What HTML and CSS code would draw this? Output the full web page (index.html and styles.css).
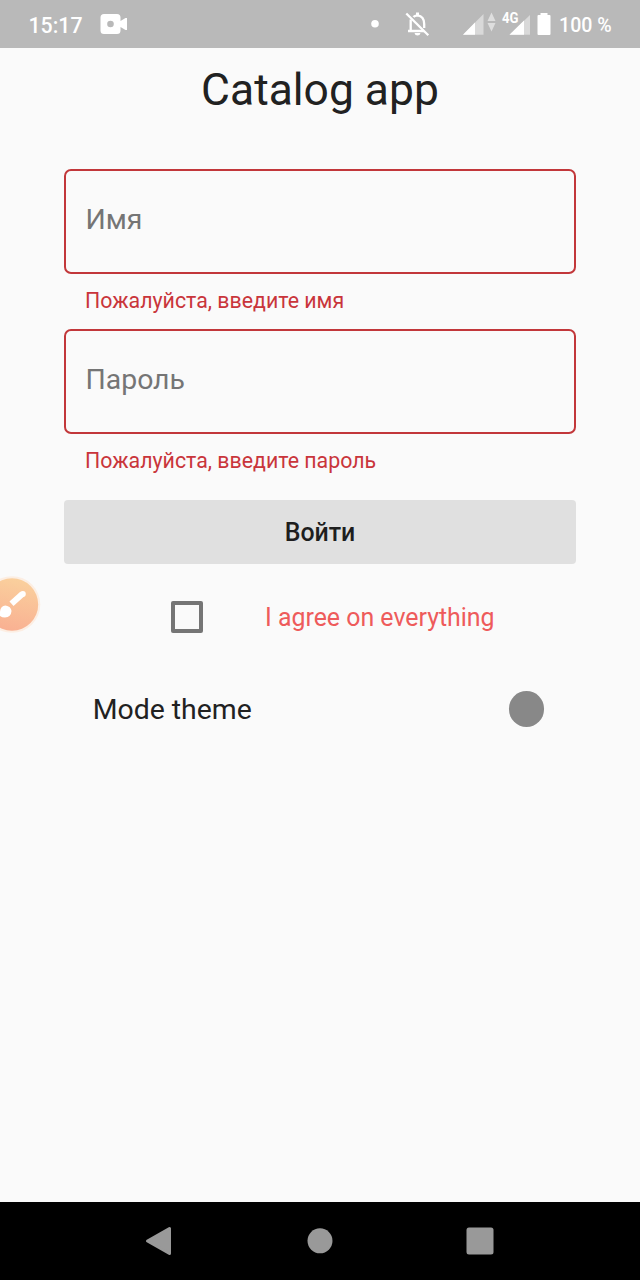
FILE: index.html
```html
<!DOCTYPE html>
<html lang="ru">
<head>
<meta charset="utf-8">
<title>Catalog app</title>
<link rel="stylesheet" href="styles.css">
</head>
<body>
<header class="status">
  <span class="clock">15:17</span>
  <svg class="camera" width="28" height="22" viewBox="0 0 28 22"><path fill="#fff" d="M4 1h13q3.500 0 3.500 3.500v3.500l5-3h1.500v12h-1.500l-5-3v3.500q0 3.500-3.500 3.500H4Q.5 21 .5 17.500v-13Q.5 1 4 1Z"/><circle cx="10.500" cy="11" r="3.300" fill="#b9b9b9"/></svg>
  <span class="spacer"></span>
  <svg class="signals" width="190" height="48" viewBox="0 0 190 48">
    <circle cx="15" cy="23.700" r="3.800" fill="#fff"/>
    <g fill="none" stroke="#fff" stroke-width="2.300">
      <path d="M46.300 13.500l22 21.700"/>
      <path d="M50.700 19.500v11.200M48 31h16M53.500 17q1-1.300 4-1.700q6.700.8 6.700 8.700v4"/>
    </g>
    <path fill="#fff" d="M56 12.500h3v3h-3zM54.500 33h6q-.5 2.500-3 2.500t-3-2.500z"/>
    <path fill="#d9d9d9" d="M123.500 14v20.700H103z"/><path fill="#fff" d="M115 22.500v12.200H103z"/>
    <path fill="#dedede" d="M131.500 12.500l4 8.500h-8zM131.500 31.500l4-8.500h-8z"/>
    <path fill="#d9d9d9" d="M170 15v19.700h-20.500z"/><path fill="#fff" d="M164 20.500v14.200h-14.500z"/>
    <text class="network" x="142" y="22.500" textLength="16.500" lengthAdjust="spacingAndGlyphs">4G</text>
    <path fill="#fff" d="M180.500 13h7v2h2q1 0 1 1v18q0 1-1 1h-11q-1 0-1-1V16q0-1 1-1h2z"/>
  </svg>
  <span class="percent">100 %</span>
</header>
<main class="screen">
  <h1 class="title">Catalog app</h1>
  <form class="form">
    <div class="field">Имя</div>
    <div class="error">Пожалуйста, введите имя</div>
    <div class="field">Пароль</div>
    <div class="error">Пожалуйста, введите пароль</div>
    <button class="submit" type="button">Войти</button>
    <div class="agree"><span class="box"></span><span class="agree-text">I agree on everything</span></div>
    <div class="mode"><span class="mode-text">Mode theme</span><span class="knob"></span></div>
  </form>
  <svg class="brush" width="42" height="60" viewBox="0 0 42 60">
    <defs><linearGradient id="peach" x1=".6" y1="0" x2=".4" y2="1"><stop offset="0" stop-color="#fad09d"/><stop offset="1" stop-color="#f9b092"/></linearGradient></defs>
    <circle cx="12" cy="29.500" r="28.300" fill="#fceee3"/>
    <circle cx="12" cy="29.500" r="26.200" fill="url(#peach)"/>
    <path d="M11.500 28.800L22.300 19" stroke="#fff" stroke-width="6"/>
    <circle cx="22.800" cy="19" r="3" fill="#fff"/>
    <path fill="#fff" d="M0 41V36.500q.5-5.500 5.500-6q5.500.8 6 5.500q-.5 6.200-6.500 6.500q-3 0-5-1.500z"/>
  </svg>
</main>
<nav class="navbar">
  <svg width="160" height="78" viewBox="0 0 160 78"><path d="M67.500 39L89.500 26.500V51.500Z" fill="#999" stroke="#999" stroke-width="3" stroke-linejoin="round"/></svg>
  <svg width="160" height="78" viewBox="0 0 160 78"><circle cx="80" cy="38.800" r="12.500" fill="#999"/></svg>
  <svg width="160" height="78" viewBox="0 0 160 78"><rect x="66.500" y="25.500" width="27" height="27" rx="2.500" fill="#999"/></svg>
</nav>
</body>
</html>
```
FILE: styles.css
```css
* { box-sizing: border-box; }
body {
  margin: 0;
  width: 640px;
  height: 1280px;
  display: flex;
  flex-direction: column;
  overflow: hidden;
  background: #fafafa;
  color: #212121;
  font-family: Roboto, "Liberation Sans", sans-serif;
}
.status {
  flex: none;
  height: 48px;
  display: flex;
  align-items: center;
  padding: 0 28px;
  background: #b9b9b9;
  color: #fff;
  font-size: 21.300px;
  font-weight: 500;
}
.clock { width: 72px; padding-top: 2px; padding-left: .5px; }
.spacer { flex: 1; }
.signals { flex: none; overflow: visible; }
.network { font-size: 14px; font-weight: 700; fill: #fff; }
.percent { width: 62px; white-space: nowrap; padding-top: 3px; padding-left: 9px; font-size: 19.600px; }
.screen { flex: 1; position: relative; }
.title {
  margin: 0;
  padding-top: 16px;
  height: 121px;
  font-size: 44.400px;
  line-height: 52px;
  font-weight: 400;
  text-align: center;
}
.form { display: flex; flex-direction: column; padding: 0 64px; }
.field {
  height: 105px;
  padding: 0 0 5px 19.500px;
  display: flex;
  align-items: center;
  border: 2px solid #c2373a;
  border-radius: 7px;
  color: #757575;
  font-size: 28.400px;
}
.error {
  height: 55px;
  padding: 14px 0 0 21px;
  line-height: 26px;
  font-size: 21.350px;
  color: #c9353b;
}
.submit {
  margin-top: 10.500px;
  height: 64px;
  padding: 1px 0 0;
  border: 0;
  border-radius: 4px;
  background: #e0e0e0;
  color: #1e1e1e;
  font: 500 24.900px Roboto, sans-serif;
}
.agree { display: flex; align-items: center; height: 106px; padding: 0 0 0 106.500px; color: #ee5b5b; font-size: 24.900px; }
.agree-text { padding-top: 2px; }
.box { width: 32px; height: 32px; border: 4px solid #757575; border-radius: 2px; margin-right: 62.500px; }
.mode { display: flex; align-items: center; justify-content: space-between; padding: 0 32px 0 28.700px; height: 79px; font-size: 28.400px; }
.knob { width: 35.500px; height: 35.500px; border-radius: 50%; background: #888; }
.brush { position: absolute; left: 0; top: 527px; }
.navbar { flex: none; height: 78px; padding: 0 80px; display: flex; background: #000; }
```
